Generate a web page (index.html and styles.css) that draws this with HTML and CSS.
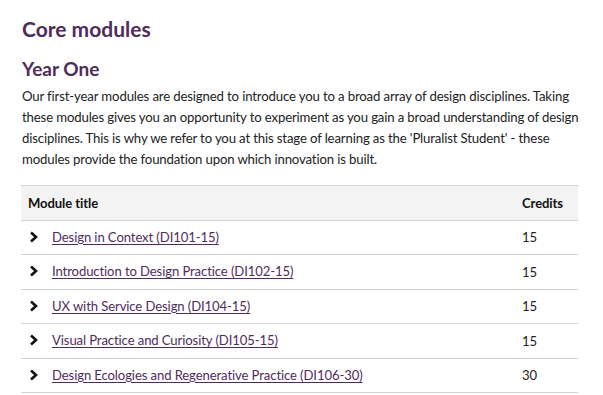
FILE: index.html
```html
<!DOCTYPE html>
<html lang="en">
<head>
    <meta charset="UTF-8">
    <meta name="viewport" content="width=device-width, initial-scale=1.0">
    <title>Core modules</title>
    <link rel="stylesheet" href="styles.css">
</head>
<body>
    <main class="course">
        <h2 class="course-title">Core modules</h2>
        <h3 class="year-title">Year One</h3>
        <p class="intro">Our first-year modules are designed to introduce you to a broad array of design disciplines. Taking these modules gives you an opportunity to experiment as you gain a broad understanding of design disciplines. This is why we refer to you at this stage of learning as the 'Pluralist Student' - these modules provide the foundation upon which innovation is built.</p>

        <table class="modules">
            <thead>
                <tr>
                    <th>Module title</th>
                    <th class="credits">Credits</th>
                </tr>
            </thead>
            <tbody>
                <tr>
                    <td><span class="chevron"><svg width="10" height="12" viewBox="0 0 10 12"><path d="M2 1.5 L7 6 L2 10.5" fill="none" stroke="#111" stroke-width="2.6"/></svg></span><a href="#">Design in Context (DI101-15)</a></td>
                    <td class="credits">15</td>
                </tr>
                <tr>
                    <td><span class="chevron"><svg width="10" height="12" viewBox="0 0 10 12"><path d="M2 1.5 L7 6 L2 10.5" fill="none" stroke="#111" stroke-width="2.6"/></svg></span><a href="#">Introduction to Design Practice (DI102-15)</a></td>
                    <td class="credits">15</td>
                </tr>
                <tr>
                    <td><span class="chevron"><svg width="10" height="12" viewBox="0 0 10 12"><path d="M2 1.5 L7 6 L2 10.5" fill="none" stroke="#111" stroke-width="2.6"/></svg></span><a href="#">UX with Service Design (DI104-15)</a></td>
                    <td class="credits">15</td>
                </tr>
                <tr>
                    <td><span class="chevron"><svg width="10" height="12" viewBox="0 0 10 12"><path d="M2 1.5 L7 6 L2 10.5" fill="none" stroke="#111" stroke-width="2.6"/></svg></span><a href="#">Visual Practice and Curiosity (DI105-15)</a></td>
                    <td class="credits">15</td>
                </tr>
                <tr>
                    <td><span class="chevron"><svg width="10" height="12" viewBox="0 0 10 12"><path d="M2 1.5 L7 6 L2 10.5" fill="none" stroke="#111" stroke-width="2.6"/></svg></span><a href="#">Design Ecologies and Regenerative Practice (DI106-30)</a></td>
                    <td class="credits">30</td>
                </tr>
            </tbody>
        </table>
    </main>
</body>
</html>
```

FILE: styles.css
```css
*{
    box-sizing: border-box;
}
body{
    margin: 0;
    padding: 0;
    font-family: Lato, 'Liberation Sans', sans-serif;
    color: #222;
    background: #fff;
}
.course{
    padding: 15px 21px 0 22px;
    width: 600px;
}
.course-title{
    margin: 0;
    font-size: 21px;
    line-height: 28px;
    font-weight: 700;
    color: #4f2c5b;
}
.year-title{
    margin: 14px 0 0;
    font-size: 19px;
    line-height: 24px;
    font-weight: 700;
    color: #4f2c5b;
}
.intro{
    margin: 5px 0 0;
    font-size: 13.2px;
    letter-spacing: -0.15px;
    line-height: 21px;
    width: 565px;
}
.modules{
    margin: 15px 0 0 -1px;
    width: 557px;
    border-collapse: collapse;
    font-size: 13.1px;
    letter-spacing: -0.1px;
}
.modules th,
.modules td{
    text-align: left;
    border-top: 1px solid #d4d4d4;
    border-bottom: 1px solid #d4d4d4;
    padding: 0 7px;
    height: 34.5px;
}
.modules th{
    background: #f3f3f3;
    font-weight: 700;
    color: #111;
}
.modules td{
    color: #222;
}
.modules .credits{
    width: 63px;
    padding-left: 7px;
}
.chevron{
    display: inline-block;
    width: 24px;
    padding-left: 1px;
    vertical-align: -1px;
}
.modules a{
    color: #4f2c5b;
    text-decoration: underline;
    text-underline-offset: 2px;
}
```
